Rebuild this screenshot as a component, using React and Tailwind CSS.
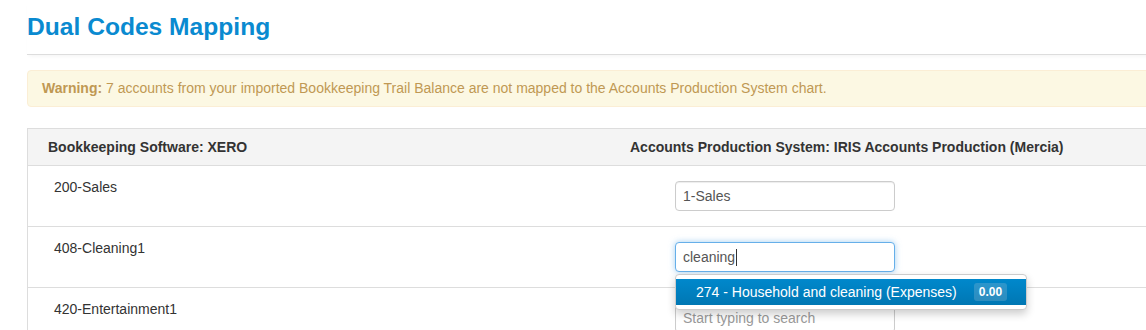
import React from 'react';

const rows = [
    { code: '200-Sales', value: '1-Sales' },
    { code: '408-Cleaning1', value: 'cleaning', focused: true },
    { code: '420-Entertainment1', value: '' },
];

function CodeInput({ value, focused }) {
    return (
        <div
            className={
                'relative w-[220px] h-[30px] rounded-[4px] border bg-white px-[7px] flex items-center text-[14px] ' +
                (focused
                    ? 'border-[#66afe9] shadow-[0_0_6px_rgba(102,175,233,0.6)]'
                    : 'border-[#cccccc] shadow-[inset_0_1px_1px_rgba(0,0,0,0.075)]')
            }
        >
            {value ? (
                <span className="text-[#555555]">{value}</span>
            ) : (
                <span className="text-[#999999]">Start typing to search</span>
            )}
            {focused && <span className="inline-block w-px h-[17px] bg-[#333333] ml-[1px]" />}

            {/* typeahead dropdown */}
            {focused && (
                <div className="absolute left-[-1px] top-[31px] w-[352px] z-10 bg-white border border-[#cccccc] rounded-[4px] shadow-[0_4px_8px_rgba(0,0,0,0.2)] py-[4px]">
                    <div className="h-[26px] flex items-center px-[20px] whitespace-nowrap text-white text-[14px] bg-gradient-to-b from-[#0088cc] to-[#0077b3]">
                        <span>274 - Household and cleaning (Expenses)</span>
                        <span className="ml-[17px] px-[5px] h-[18px] flex items-center rounded-[3px] bg-[rgba(200,210,220,0.22)] text-[12px] font-bold">
                            0.00
                        </span>
                    </div>
                </div>
            )}
        </div>
    );
}

export default function App() {
    return (
        <div className="w-[1146px] h-[330px] overflow-hidden bg-white font-['Liberation_Sans',Arial,sans-serif]">
            <div className="ml-[27px] w-[1200px]">
                {/* Heading */}
                <div className="pt-[11px] pb-[11px] border-b border-[#dddddd] shadow-[0_3px_4px_-2px_rgba(0,0,0,0.05)]">
                    <h1 className="text-[24.6px] leading-[32px] font-bold text-[#0a8ad0]">Dual Codes Mapping</h1>
                </div>

                {/* Warning */}
                <div className="mt-[15px] border border-[#fbeed5] bg-[#fcf8e3] rounded-[4px] px-[14px] py-[10px] text-[14px] leading-[15px] text-[#c09853]">
                    <strong>Warning:</strong> 7 accounts from your imported Bookkeeping Trail Balance are not mapped to the Accounts Production System chart.
                </div>

                {/* Mapping table */}
                <div className="mt-[21px] border-t border-l border-[#dddddd] text-[14px] text-[#333333]">
                    <div className="flex bg-[#f4f4f4] border-b border-[#dddddd] font-bold h-[37px] items-center">
                        <div className="w-[602px] pl-[20px]">Bookkeeping Software: XERO</div>
                        <div className="flex-1">Accounts Production System: IRIS Accounts Production (Mercia)</div>
                    </div>
                    {rows.map((row) => (
                        <div key={row.code} className="flex h-[61px] border-b border-[#dddddd]">
                            <div className="w-[602px] pl-[26px] pt-[11px] leading-[20px]">{row.code}</div>
                            <div className="flex-1 pl-[45px] pt-[15px]">
                                <CodeInput value={row.value} focused={row.focused} />
                            </div>
                        </div>
                    ))}
                </div>
            </div>
        </div>
    );
}
